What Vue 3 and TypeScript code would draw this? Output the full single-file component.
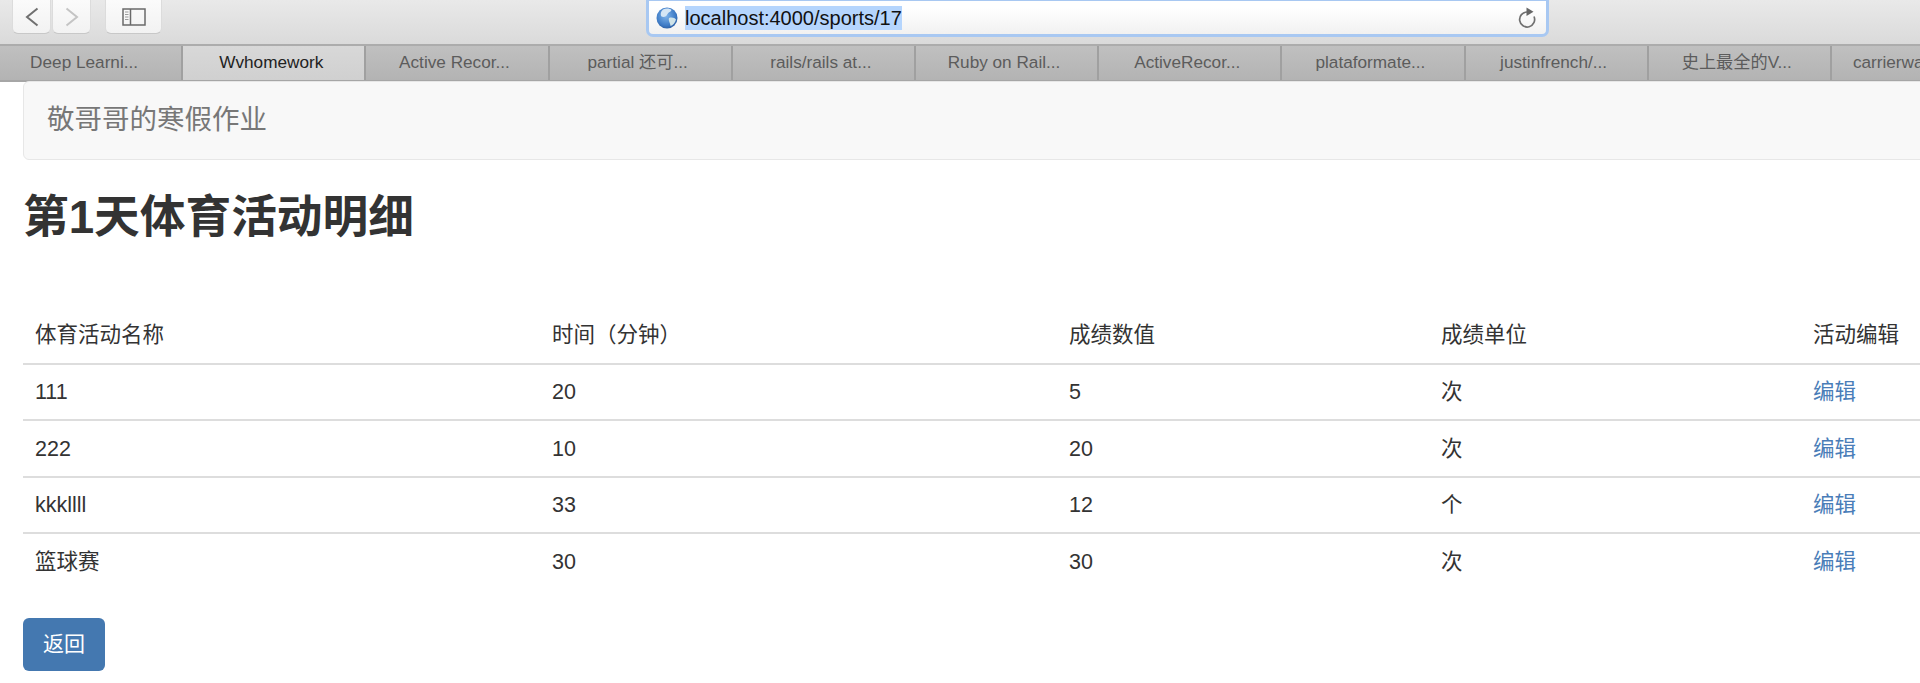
<script setup lang="ts">
interface Row { name: string; time: string; score: string; unit: string }
const tabs: string[] = ['Deep Learni...', 'Wvhomework', 'Active Recor...', 'partial 还可...', 'rails/rails at...', 'Ruby on Rail...', 'ActiveRecor...', 'plataformate...', 'justinfrench/...', '史上最全的V...', 'carrierwa']
const rows: Row[] = [
  { name: '111', time: '20', score: '5', unit: '次' },
  { name: '222', time: '10', score: '20', unit: '次' },
  { name: 'kkkllll', time: '33', score: '12', unit: '个' },
  { name: '篮球赛', time: '30', score: '30', unit: '次' },
]
</script>

<template>
  <div class="page">
    <header class="toolbar">
      <button class="tool nav-btn">
        <svg width="14" height="20" viewBox="0 0 14 20"><path d="M12.500 1.500 L2 10 L12.500 18.500" fill="none" stroke="#707070" stroke-width="2"/></svg>
      </button>
      <button class="tool nav-btn next">
        <svg width="14" height="20" viewBox="0 0 14 20"><path d="M1.500 1.500 L12 10 L1.500 18.500" fill="none" stroke="#c4c4c4" stroke-width="2"/></svg>
      </button>
      <button class="tool side-btn">
        <svg width="24" height="18" viewBox="0 0 24 18">
          <rect x="1" y="1" width="22" height="16" fill="none" stroke="#6a6a6a" stroke-width="1.500"/>
          <path d="M8.500 1 V17" stroke="#6a6a6a" stroke-width="1.500"/>
          <path d="M3 4 H6.500 M3 6.500 H6.500 M3 9 H6.500 M3 11.500 H6.500" stroke="#9a9a9a" stroke-width="1"/>
        </svg>
      </button>
      <div class="url">
        <svg class="globe" width="22" height="22" viewBox="0 0 22 22">
          <defs>
            <radialGradient id="sea" cx="45%" cy="40%" r="65%">
              <stop offset="0" stop-color="#7fb4ea"/>
              <stop offset="0.7" stop-color="#3f7cc6"/>
              <stop offset="1" stop-color="#2a5a9c"/>
            </radialGradient>
          </defs>
          <circle cx="11" cy="11" r="10.500" fill="url(#sea)"/>
          <path d="M7 2.500 C10 1 14 1.500 15.500 3 C15 5 12.500 5 11.500 7 C10.500 9.500 8 10.500 5.500 9.500 C4 7.500 5 4 7 2.500 Z" fill="#d5e6f5"/>
          <path d="M13 11 C16 10 19 11 20 12.500 C19 16 16.500 18.500 14.500 19 C14.500 16 12 14 13 11 Z" fill="#cfe3e8"/>
        </svg>
        <span class="address">localhost:4000/sports/17</span>
        <svg class="reload" width="20" height="22" viewBox="0 0 20 22">
          <path d="M9 5 A7.500 7.500 0 1 0 16 9.500" fill="none" stroke="#707070" stroke-width="1.700"/>
          <path d="M8.500 0.500 L15.500 4.700 L8.500 9 Z" fill="#666"/>
        </svg>
      </div>
    </header>

    <nav class="tabs">
      <div v-for="(tab, i) in tabs" :key="tab" class="tab" :class="{ active: i === 1, first: i === 0, last: i === 10 }">{{ tab }}</div>
    </nav>

    <main class="content">
      <div class="navbar">敬哥哥的寒假作业</div>
      <h2 class="title">第1天体育活动明细</h2>
      <table class="table">
        <thead>
          <tr>
            <th class="c1">体育活动名称</th>
            <th class="c1">时间（分钟）</th>
            <th class="c2">成绩数值</th>
            <th class="c2">成绩单位</th>
            <th class="c3">活动编辑</th>
          </tr>
        </thead>
        <tbody>
          <tr v-for="row in rows" :key="row.name">
            <td>{{ row.name }}</td>
            <td>{{ row.time }}</td>
            <td>{{ row.score }}</td>
            <td>{{ row.unit }}</td>
            <td><a class="link" href="#">编辑</a></td>
          </tr>
        </tbody>
      </table>
      <a class="back" href="#">返回</a>
    </main>
  </div>
</template>

<style>
html, body { margin: 0; background: #fff; overflow: hidden; }
</style>

<style scoped>
.page {
  width: 1920px;
  height: 683px;
  overflow: hidden;
  font-family: "Liberation Sans", "Noto Sans CJK SC", sans-serif;
  color: #333;
}
.toolbar {
  display: flex;
  align-items: flex-start;
  height: 44px;
  box-sizing: border-box;
  padding-left: 12px;
  background: linear-gradient(#e9e9e9, #dadada);
}
.tool {
  display: flex;
  align-items: center;
  justify-content: center;
  height: 34px;
  padding: 0;
  background: linear-gradient(#fbfbfb, #f2f2f2);
  border: 1px solid #dcdcdc;
  border-top: 0;
  border-bottom: 1px solid #c8c8c8;
  border-radius: 0 0 6px 6px;
  box-sizing: border-box;
}
.nav-btn { width: 39px; }
.next { margin-left: 1px; }
.side-btn { width: 57px; margin-left: 14px; }
.url {
  display: flex;
  align-items: center;
  width: 903px;
  height: 37px;
  margin-left: 484px;
  padding: 0 8px 0 7px;
  box-sizing: border-box;
  background: linear-gradient(#fff 20%, #f1f1f1);
  border: 3px solid #a8c8f2;
  border-top-width: 1px;
  border-radius: 0 0 7px 7px;
}
.globe { flex: none; }
.address {
  margin-left: 7px;
  font-size: 20px;
  line-height: 24px;
  color: #111;
  background: #b5d5fd;
}
.reload { margin-left: auto; }
.tabs {
  display: flex;
  height: 38px;
  box-sizing: border-box;
  border-top: 2px solid #acacac;
  border-bottom: 2px solid #a6a6a6;
  background: linear-gradient(#c0c0c0, #b3b3b3);
}
.tab {
  flex: none;
  width: 183.200px;
  padding-right: 5px;
  box-sizing: border-box;
  border-right: 2px solid #a0a0a0;
  text-align: center;
  font-size: 17.200px;
  line-height: 33px;
  color: #5c5c5c;
  white-space: nowrap;
  overflow: hidden;
}
.tab.first { padding-right: 13px; }
.tab.last { text-align: left; padding-left: 21px; }
.tab.active {
  background: linear-gradient(#d8d8d8, #d0d0d0);
  color: #222;
}
.content { padding-left: 23px; }
.navbar {
  box-sizing: border-box;
  height: 79px;
  margin: -1px -20px 0 0;
  padding-left: 23px;
  background: #f8f8f8;
  border: 1.500px solid #e7e7e7;
  border-radius: 6px;
  font-size: 27.500px;
  line-height: 76px;
  color: #777;
}
.title {
  margin: 29px 0 0;
  font-size: 45.700px;
  line-height: 58px;
  font-weight: 700;
  color: #333;
}
.table {
  width: 1897px;
  margin-top: 60px;
  table-layout: fixed;
  border-collapse: collapse;
  font-size: 21.500px;
}
.c1 { width: 517px; }
.c2 { width: 372px; }
.c3 { width: 119px; }
th, td {
  height: 56.500px;
  padding: 1px 12px 0;
  box-sizing: border-box;
  text-align: left;
  font-weight: 400;
  line-height: 30px;
}
th { border-bottom: 2px solid #ddd; }
tbody tr + tr td { border-top: 2px solid #ddd; }
.link { color: #4a7db8; text-decoration: none; }
.back {
  display: block;
  width: 82px;
  height: 53px;
  margin-top: 28px;
  box-sizing: border-box;
  background: #4478b0;
  border-radius: 6px;
  text-align: center;
  font-size: 21px;
  line-height: 51px;
  color: #fff;
  text-decoration: none;
}
</style>
